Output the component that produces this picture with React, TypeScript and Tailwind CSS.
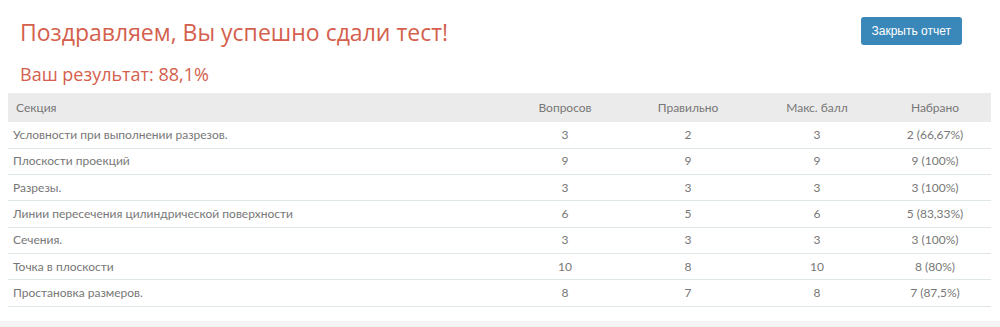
const rows = [
  { name: "Условности при выполнении разрезов.", q: 3, ok: 2, max: 3, got: "2 (66,67%)" },
  { name: "Плоскости проекций", q: 9, ok: 9, max: 9, got: "9 (100%)" },
  { name: "Разрезы.", q: 3, ok: 3, max: 3, got: "3 (100%)" },
  { name: "Линии пересечения цилиндрической поверхности", q: 6, ok: 5, max: 6, got: "5 (83,33%)" },
  { name: "Сечения.", q: 3, ok: 3, max: 3, got: "3 (100%)" },
  { name: "Точка в плоскости", q: 10, ok: 8, max: 10, got: "8 (80%)" },
  { name: "Простановка размеров.", q: 8, ok: 7, max: 8, got: "7 (87,5%)" },
];

const App = () => {
  return (
    <div className="w-[1000px] h-[327px] bg-white flex flex-col overflow-hidden">
      <div className="flex justify-between items-start pl-5 pr-[38px] pt-[16px]">
        <div className="flex flex-col">
          <h1 className="text-[23px] leading-[32px] text-[#d4604d] font-['Open_Sans',sans-serif]">
            Поздравляем, Вы успешно сдали тест!
          </h1>
          <p className="mt-[14px] text-[18px] leading-[24px] text-[#d4604d] font-['Open_Sans',sans-serif]">
            Ваш результат: 88,1%
          </p>
        </div>
        <button className="mt-[1px] h-[28px] px-[11px] rounded-[3px] bg-[#3a88ba] text-white text-[12px] font-['Liberation_Sans',sans-serif]">
          Закрыть отчет
        </button>
      </div>

      <table className="mt-[7px] ml-[8px] w-[983px] border-collapse text-[12px] text-[#777] font-['Lato',sans-serif]">
        <thead>
          <tr className="bg-[#ebebeb] h-[29px]">
            <th className="w-[501px] text-left font-normal pl-[8px]">Секция</th>
            <th className="w-[112px] font-normal">Вопросов</th>
            <th className="w-[134px] font-normal">Правильно</th>
            <th className="w-[124px] font-normal">Макс. балл</th>
            <th className="w-[112px] font-normal">Набрано</th>
          </tr>
        </thead>
        <tbody>
          {rows.map((r) => (
            <tr key={r.name} className="h-[26.3px] border-b border-[#dfe6e8]">
              <td className="pl-[5px]">{r.name}</td>
              <td className="text-center">{r.q}</td>
              <td className="text-center">{r.ok}</td>
              <td className="text-center">{r.max}</td>
              <td className="text-center">{r.got}</td>
            </tr>
          ))}
        </tbody>
      </table>
      <div className="mt-auto h-[6px] bg-[#f4f4f4]" />
    </div>
  );
};

export default App;
